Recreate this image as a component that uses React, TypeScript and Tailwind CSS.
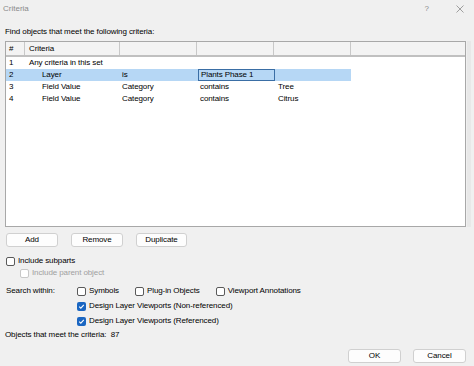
import React from 'react';

const font = { fontFamily: '"Liberation Sans", Arial, sans-serif' };

const rows = [
  { n: '1', a: 'Any criteria in this set', b: '', c: '', d: '', indent: false },
  { n: '2', a: 'Layer', b: 'is', c: 'Plants Phase 1', d: '', indent: true, sel: true },
  { n: '3', a: 'Field Value', b: 'Category', c: 'contains', d: 'Tree', indent: true },
  { n: '4', a: 'Field Value', b: 'Category', c: 'contains', d: 'Citrus', indent: true },
];

function Box({ checked, disabled }: { checked?: boolean; disabled?: boolean }) {
  if (checked) {
    return (
      <span className="flex h-[9px] w-[9px] shrink-0 items-center justify-center rounded-[2px] bg-[#1a66c2]">
        <svg width="7" height="7" viewBox="0 0 7 7">
          <path d="M1.2 3.7 L2.8 5.2 L5.8 1.8" fill="none" stroke="#fff" strokeWidth="1.1" />
        </svg>
      </span>
    );
  }
  return (
    <span
      className={`h-[9px] w-[9px] shrink-0 rounded-[2px] border bg-white ${disabled ? 'border-[#c8c8c8]' : 'border-[#5a5a5a]'}`}
    />
  );
}

function Check({ label, checked, disabled }: { label: string; checked?: boolean; disabled?: boolean }) {
  return (
    <div className={`flex h-[12px] items-center gap-[3px] ${disabled ? 'text-[#a0a0a0]' : 'text-black'}`}>
      <Box checked={checked} disabled={disabled} />
      <span className="whitespace-nowrap">{label}</span>
    </div>
  );
}

function Btn({ label, w }: { label: string; w: string }) {
  return (
    <button className={`${w} h-[14px] rounded-[3px] border border-[#d0d0d0] bg-[#fdfdfd] text-[8px] leading-[12px] tracking-[-0.1px] text-black`}>
      {label}
    </button>
  );
}

export default function App() {
  return (
    <div className="h-[366px] w-[474px] overflow-hidden bg-[#f0f0f0] text-[8px] leading-[12px] tracking-[-0.1px] text-black" style={font}>
      <div className="flex h-[17px] items-center justify-between pl-[3px] pr-[10px] text-[8px] tracking-normal text-[#8a8a8a]">
        <span>Criteria</span>
        <div className="flex items-center gap-[27px]">
          <span>?</span>
          <svg width="8" height="8" viewBox="0 0 8 8">
            <path d="M0.5 0.5 L7.5 7.5 M7.5 0.5 L0.5 7.5" stroke="#8a8a8a" strokeWidth="0.8" />
          </svg>
        </div>
      </div>

      <div className="pl-[5px] pt-[9px]">Find objects that meet the following criteria:</div>

      <div className="ml-[5px] mt-[3px] flex w-[466px]">
        <div className="h-[186px] w-[461px] border border-[#a8a8a8] bg-white">
          <div className="flex h-[15px] border-b-2 border-[#c0c0c0] bg-[#f3f3f3]">
            <div className="w-[19px] border-r border-[#c8c8c8] pl-[3px] leading-[13px]">#</div>
            <div className="w-[95px] border-r border-[#c8c8c8] pl-[4px] leading-[13px]">Criteria</div>
            <div className="w-[77px] border-r border-[#c8c8c8]" />
            <div className="w-[77px] border-r border-[#c8c8c8]" />
            <div className="w-[77px] border-r border-[#c8c8c8]" />
            <div className="flex-1" />
          </div>
          <div>
            {rows.map((r) => (
              <div key={r.n} className="flex h-[12px] items-center leading-[12px]">
                <div className={`flex h-full w-[345px] ${r.sel ? 'bg-[#b6d7f5]' : ''}`}>
                  <div className="w-[20px] pl-[3px]">{r.n}</div>
                  <div className={`w-[95px] whitespace-nowrap ${r.indent ? 'pl-[16px]' : 'pl-[3px]'}`}>{r.a}</div>
                  <div className="w-[77px] pl-[1px]">{r.b}</div>
                  <div className="w-[77px]">
                    {r.sel ? (
                      <div className="h-[12px] border border-[#3a6ea5] bg-[#b6d7f5] pl-[2px] leading-[10px]">{r.c}</div>
                    ) : (
                      <div className="pl-[2px]">{r.c}</div>
                    )}
                  </div>
                  <div className="w-[76px] pl-[3px]">{r.d}</div>
                </div>
              </div>
            ))}
          </div>
        </div>
        <div className="ml-[1px] w-[4px] bg-[#e8e8e8]" />
      </div>

      <div className="ml-[6px] mt-[6px] flex gap-[13px]">
        <Btn label="Add" w="w-[52px]" />
        <Btn label="Remove" w="w-[52px]" />
        <Btn label="Duplicate" w="w-[51px]" />
      </div>

      <div className="ml-[6px] mt-[8px]">
        <Check label="Include subparts" />
      </div>
      <div className="ml-[20px]">
        <Check label="Include parent object" disabled />
      </div>

      <div className="ml-[6px] mt-[6px] flex">
        <div className="w-[71px]">Search within:</div>
        <div className="flex flex-col gap-[3px]">
          <div className="flex gap-[16px]">
            <Check label="Symbols" />
            <Check label="Plug-in Objects" />
            <Check label="Viewport Annotations" />
          </div>
          <Check label="Design Layer Viewports (Non-referenced)" checked />
          <Check label="Design Layer Viewports (Referenced)" checked />
        </div>
      </div>

      <div className="ml-[5px] mt-[2px]">Objects that meet the criteria:&nbsp; 87</div>

      <div className="mr-[8px] mt-[8px] flex justify-end gap-[12px]">
        <Btn label="OK" w="w-[53px]" />
        <Btn label="Cancel" w="w-[53px]" />
      </div>
    </div>
  );
}
